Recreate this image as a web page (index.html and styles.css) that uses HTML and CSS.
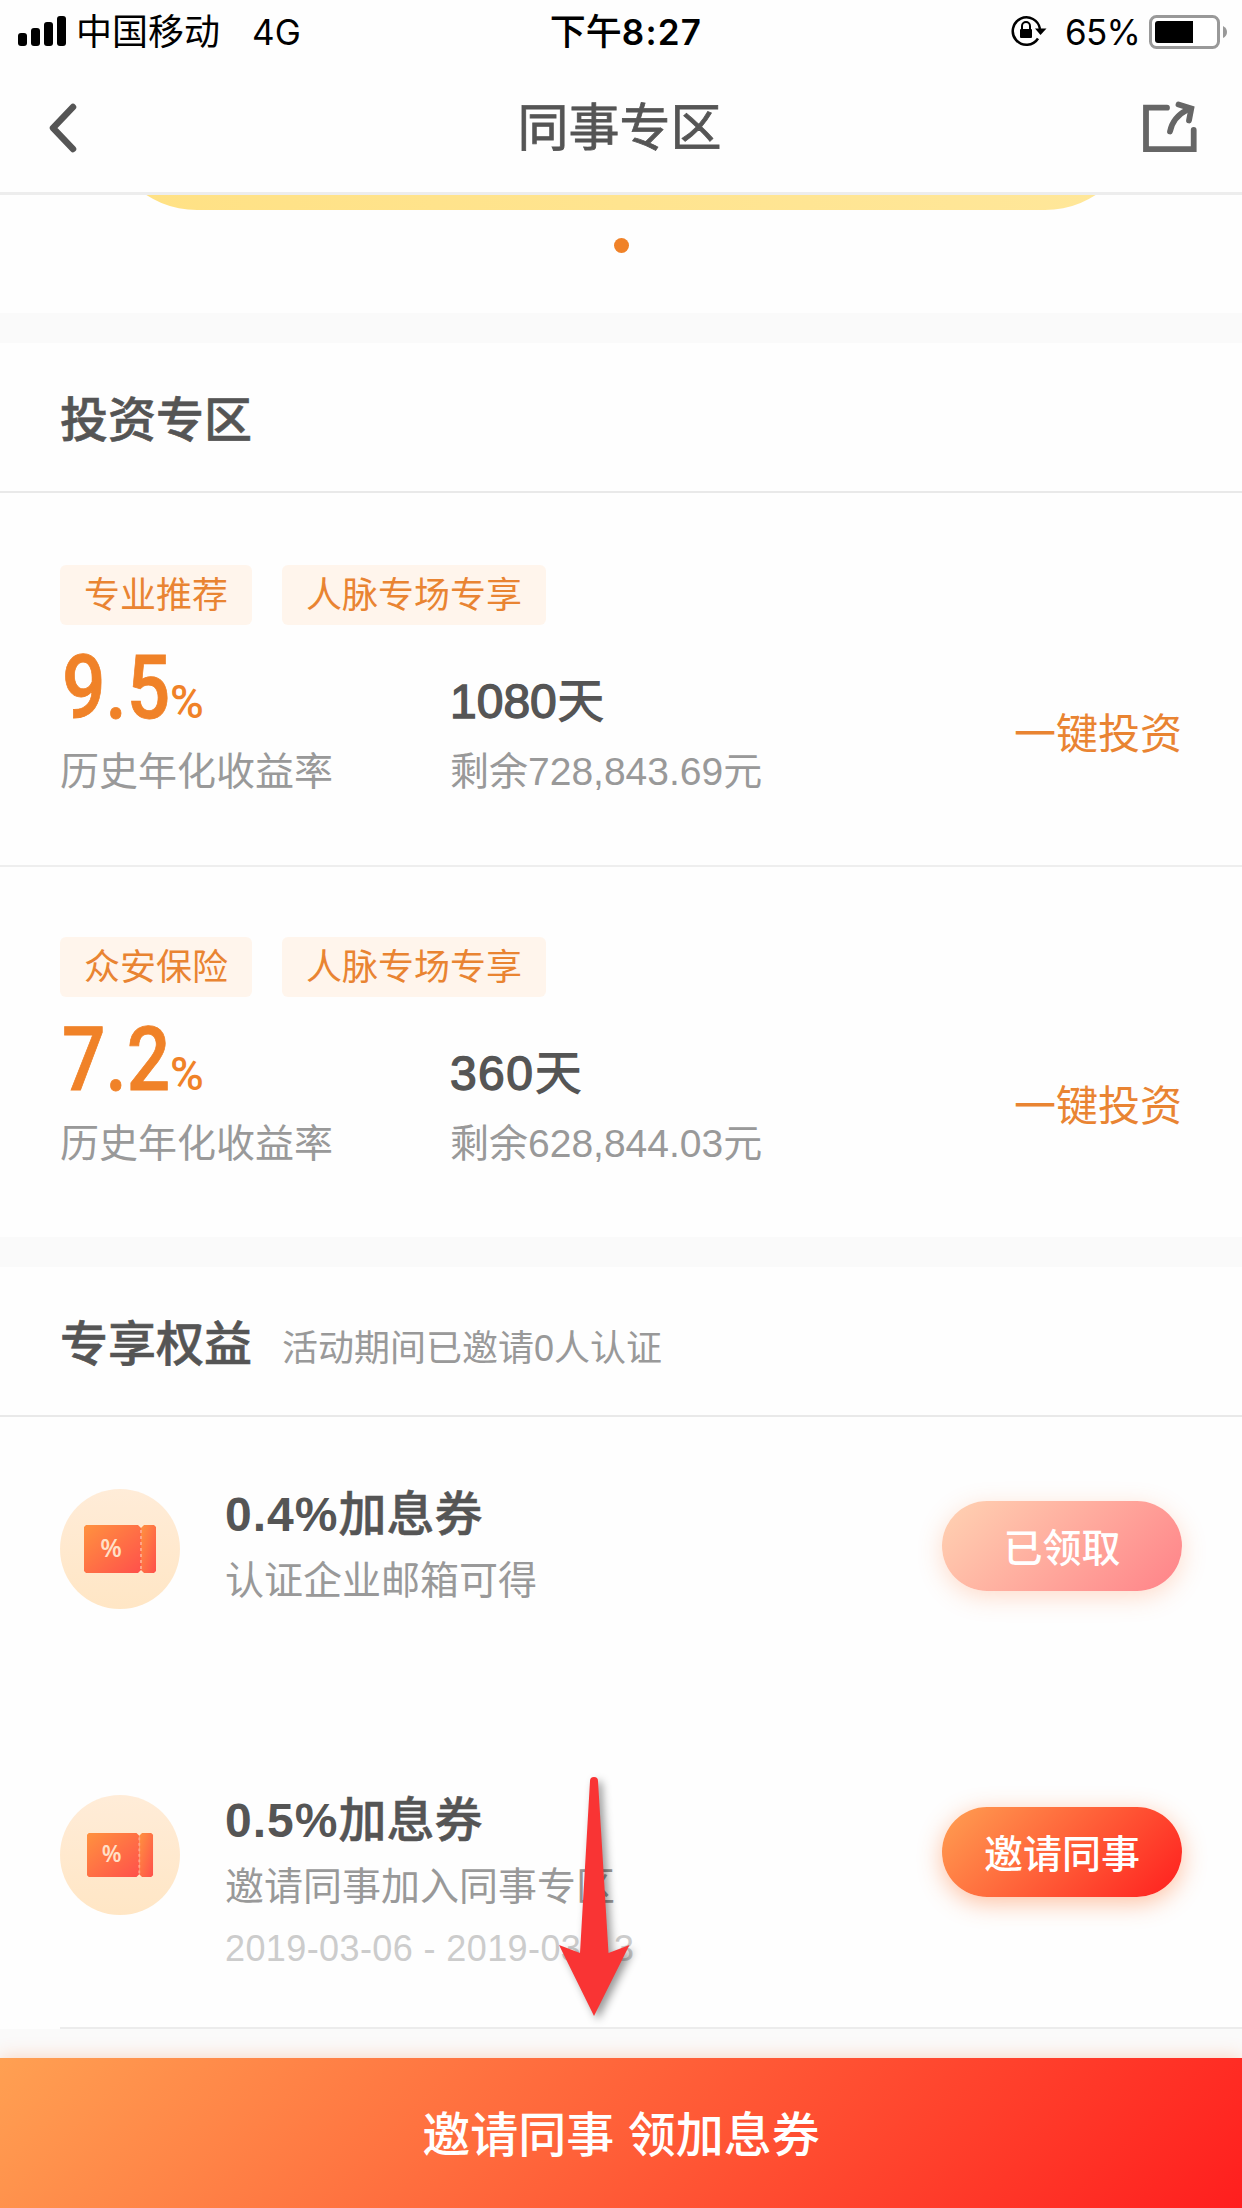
FILE: index.html
```html
<!DOCTYPE html>
<html lang="zh-CN">
<head>
<meta charset="utf-8">
<title>同事专区</title>
<link rel="stylesheet" href="styles.css">
</head>
<body>
<div class="page">
  <header class="status">
    <div class="status-left">
      <svg class="signal" width="49" height="31" viewBox="0 0 49 31"><rect x="0" y="17" width="9" height="13" rx="3"/><rect x="13" y="12" width="9" height="18" rx="3"/><rect x="26" y="6" width="9" height="24" rx="3"/><rect x="39" y="0" width="9" height="30" rx="3"/></svg>
      <span class="carrier">中国移动</span><span class="net">4G</span>
    </div>
    <div class="clock">下午<b>8:27</b></div>
    <div class="status-right">
      <svg class="lock" width="36" height="32" viewBox="0 0 36 32"><path d="M27 23.500A13.700 13.700 0 1 1 29 14" fill="none" stroke="#000" stroke-width="2.500"/><path d="M24 13.500h11.500L29.500 20z"/><rect x="9" y="14" width="12" height="9" rx="1"/><path d="M11 14v-3a4 4 0 0 1 8 0v3" fill="none" stroke="#000" stroke-width="2"/></svg>
      <span class="pct">65%</span>
      <svg class="battery" width="79" height="34" viewBox="0 0 79 34"><rect x="1.500" y="1.500" width="68" height="31" rx="6" fill="#fff" stroke="#999" stroke-width="3"/><path d="M9 6h35v22H9a3 3 0 0 1-3-3V9a3 3 0 0 1 3-3z"/><path d="M74 11q4 2 4 6t-4 6z" fill="#999"/></svg>
    </div>
  </header>
  <nav class="nav">
    <svg class="back" width="32" height="54" viewBox="0 0 32 54"><path d="M26 8L6 29l20 21" fill="none" stroke="#555" stroke-width="6.500" stroke-linecap="round" stroke-linejoin="round"/></svg>
    <h1>同事专区</h1>
    <svg class="share" width="58" height="54" viewBox="0 0 58 54"><g fill="none" stroke="#666" stroke-width="5.800" stroke-linecap="round"><path d="M26 8.700H5V50.200H52.700V31"/><path d="M29 32.500Q32 18 46 11"/><path d="M37.500 5.500L50.300 9.500 48 21.500"/></g></svg>
  </nav>

  <section class="banner"><div class="slide"></div><i class="dot"></i></section>

  <section class="block">
    <div class="head"><h2>投资专区</h2></div>
    <article class="product">
      <div class="tags"><span>专业推荐</span><span>人脉专场专享</span></div>
      <div class="facts">
        <div class="rate"><p class="num"><b>9.5</b><small>%</small></p><p class="label">历史年化收益率</p></div>
        <div class="term"><p class="days"><b>1080</b>天</p><p class="label">剩余728,843.69元</p></div>
        <a class="invest">一键投资</a>
      </div>
    </article>
    <article class="product">
      <div class="tags"><span>众安保险</span><span>人脉专场专享</span></div>
      <div class="facts">
        <div class="rate"><p class="num"><b>7.2</b><small>%</small></p><p class="label">历史年化收益率</p></div>
        <div class="term"><p class="days"><b>360</b>天</p><p class="label">剩余628,844.03元</p></div>
        <a class="invest">一键投资</a>
      </div>
    </article>
  </section>

  <section class="block">
    <div class="head"><h2>专享权益</h2><span class="note">活动期间已邀请0人认证</span></div>
    <article class="perk">
      <svg class="badge" viewBox="0 0 120 120">
        <defs>
          <linearGradient id="disc" x1="0" y1="0" x2="0" y2="1"><stop offset="0" stop-color="#ffecd8"/><stop offset="1" stop-color="#ffe6c5"/></linearGradient>
          <linearGradient id="tick" x1="0" y1="0" x2="1" y2="1"><stop offset="0" stop-color="#ff923f"/><stop offset="1" stop-color="#ff504b"/></linearGradient>
          <g id="ticket"><path d="M26 36H78l3 3v42l-3 3H26l-2-2V38z" fill="url(#tick)"/><path d="M84 36h10l2 2v44l-2 2H84l-3-3V39z" fill="url(#tick)"/><path d="M81 41v40" stroke="#ffa488" stroke-width="2" stroke-dasharray="3 3"/><text class="tick-sign" x="51" y="67.500" text-anchor="middle">%</text></g>
        </defs>
        <circle cx="60" cy="60" r="60" fill="url(#disc)"/><use href="#ticket"/>
      </svg>
      <div class="perk-text"><h3><b>0.4%</b>加息券</h3><p>认证企业邮箱可得</p></div>
      <button class="pill done">已领取</button>
    </article>
    <article class="perk last">
      <svg class="badge" viewBox="0 0 120 120"><circle cx="60" cy="60" r="60" fill="url(#disc)"/><use href="#ticket" transform="translate(5 5) scale(.917)"/></svg>
      <div class="perk-text"><h3><b>0.5%</b>加息券</h3><p>邀请同事加入同事专区</p><time>2019-03-06 - 2019-03-13</time></div>
      <button class="pill">邀请同事</button>
    </article>
  </section>

  <footer class="cta">邀请同事 领加息券</footer>
  <svg class="arrow" width="90" height="260" viewBox="0 0 90 260"><path d="M40 11q0-4 4-4t4 4L58.500 183 79.500 175 44 246 9 175 30 183z" fill="#f93434"/></svg>
</div>
</body>
</html>
```
FILE: styles.css
```css
* { box-sizing: border-box; }
body, h1, h2, h3, p { margin: 0; font-weight: 400; }
body { background: #fafafa; color: #555; font-family: "Liberation Sans", "Noto Sans CJK SC", sans-serif; }
.page { position: relative; width: 1242px; height: 2208px; overflow: hidden; display: flex; flex-direction: column; }

.status { height: 60px; padding: 0 14px 0 18px; display: grid; grid-template-columns: 1fr auto 1fr; align-items: center; background: #fefefe; color: #000; font-size: 36px; line-height: 60px; }
.status-left, .status-right { display: flex; align-items: center; height: 60px; }
.signal { margin-right: 9px; }
.carrier, .clock { padding-top: 2px; }
.net { margin-left: 32px; padding-top: 1px; font-family: Inter, sans-serif; font-size: 35px; }
.clock { padding-left: 6px; font-weight: 500; }
.clock b { font-family: Inter, sans-serif; font-weight: 600; font-size: 35px; letter-spacing: 1.2px; }
.status-right { justify-content: flex-end; }
.lock { margin: -2px 2px 0 0; }
.pct { margin: 0 9px 0 16px; padding-top: 1px; font-family: Inter, sans-serif; font-size: 35px; letter-spacing: -.8px; }

.nav { height: 135px; padding: 0 43px 0 47px; display: grid; grid-template-columns: 1fr auto 1fr; align-items: center; border-bottom: 3px solid #ededed; background: #fefefe; }
.nav h1 { padding: 5px 7px 0 0; font-size: 51px; line-height: 60px; -webkit-text-stroke: .8px #555; }
.share { justify-self: end; }

.banner { height: 118px; display: flex; flex-direction: column; align-items: center; background: #fefefe; overflow: hidden; }
.slide { flex: none; width: 1034px; height: 200px; margin-top: -185px; border-radius: 93px; background: linear-gradient(90deg, #ffe184, #ffe79a); }
.dot { width: 15px; height: 15px; margin-top: 28px; border-radius: 50%; background: #f08228; }

.block { margin-top: 30px; background: #fefefe; }
.head { height: 150px; padding: 0 60px; display: flex; align-items: center; border-bottom: 2px solid #e9e9e9; }
h2 { padding-top: 8px; font-size: 48px; line-height: 72px; font-weight: 500; -webkit-text-stroke: .6px #555; }
.note { margin: 8px 0 0 30px; font-size: 36px; color: #999; }

.product { height: 372px; padding: 72px 60px 0; }
.product + .product { padding-top: 70px; border-top: 2px solid #eee; }
.tags { display: flex; gap: 30px; }
.tags span { height: 60px; padding: 1px 24px 0; border-radius: 6px; background: #fff5ec; color: #e98432; font-size: 36px; line-height: 60px; }
.facts { display: grid; grid-template-columns: 390px 1fr auto; }
.num { height: 116px; padding: 13px 0 0 2px; color: #f08228; line-height: 100px; font-family: Roboto, sans-serif; white-space: nowrap; }
.num b { display: inline-block; margin-right: -18px; font-size: 89px; font-weight: 500; -webkit-text-stroke: .8px #f08228; transform: scaleX(.86); transform-origin: left; }
.num small { font-size: 46px; font-weight: 500; }
.label { font-size: 39px; line-height: 62px; color: #999; white-space: nowrap; }
.days { height: 116px; padding-top: 47px; font-size: 48px; line-height: 60px; font-weight: 500; }
.days b { font-weight: 400; -webkit-text-stroke: 1.4px #555; }
.product + .product .days b { letter-spacing: 1.4px; }
.invest { align-self: start; margin-top: 79px; font-size: 42px; line-height: 62px; color: #e98432; }

.perk { height: 306px; padding: 72px 60px 0; display: grid; grid-template-columns: 165px 1fr 240px; align-items: start; }
.perk.last { margin-left: 60px; padding-left: 0; border-bottom: 2px solid #ececec; }
.badge { width: 120px; height: 120px; }
.tick-sign { font: 600 25px "Open Sans", sans-serif; fill: #ffe0c8; }
.perk h3 { margin-top: -8px; font-size: 48px; line-height: 68px; font-weight: 500; -webkit-text-stroke: .5px #555; }
.perk h3 b { letter-spacing: 1px; -webkit-text-stroke: 0; }
.perk p { font-size: 39px; line-height: 64px; color: #999; }
.perk time { display: block; font-size: 36px; line-height: 60px; letter-spacing: .4px; color: #ccc; }
.pill { width: 240px; height: 90px; margin: 12px 0 0; padding: 0 0 3px; border: 0; border-radius: 45px; background: linear-gradient(135deg, #ffa052, #ff1e1e); box-shadow: 0 6px 24px rgba(255, 120, 50, .45); color: #fff; font: 500 39px "Noto Sans CJK SC", sans-serif; }
.pill.done { background: linear-gradient(135deg, #ffd3b3, #ff8288); box-shadow: 0 6px 24px rgba(255, 120, 50, .25); }

.cta { height: 150px; margin-top: auto; padding-top: 3px; background: linear-gradient(135deg, #ffa052, #ff1e1e); box-shadow: 0 0 18px rgba(255, 120, 50, .3); color: #fff; font-size: 48px; font-weight: 500; line-height: 150px; text-align: center; }
.arrow { position: absolute; left: 550px; top: 1770px; filter: drop-shadow(4px 4px 4px rgba(0, 0, 0, .4)); }
```
